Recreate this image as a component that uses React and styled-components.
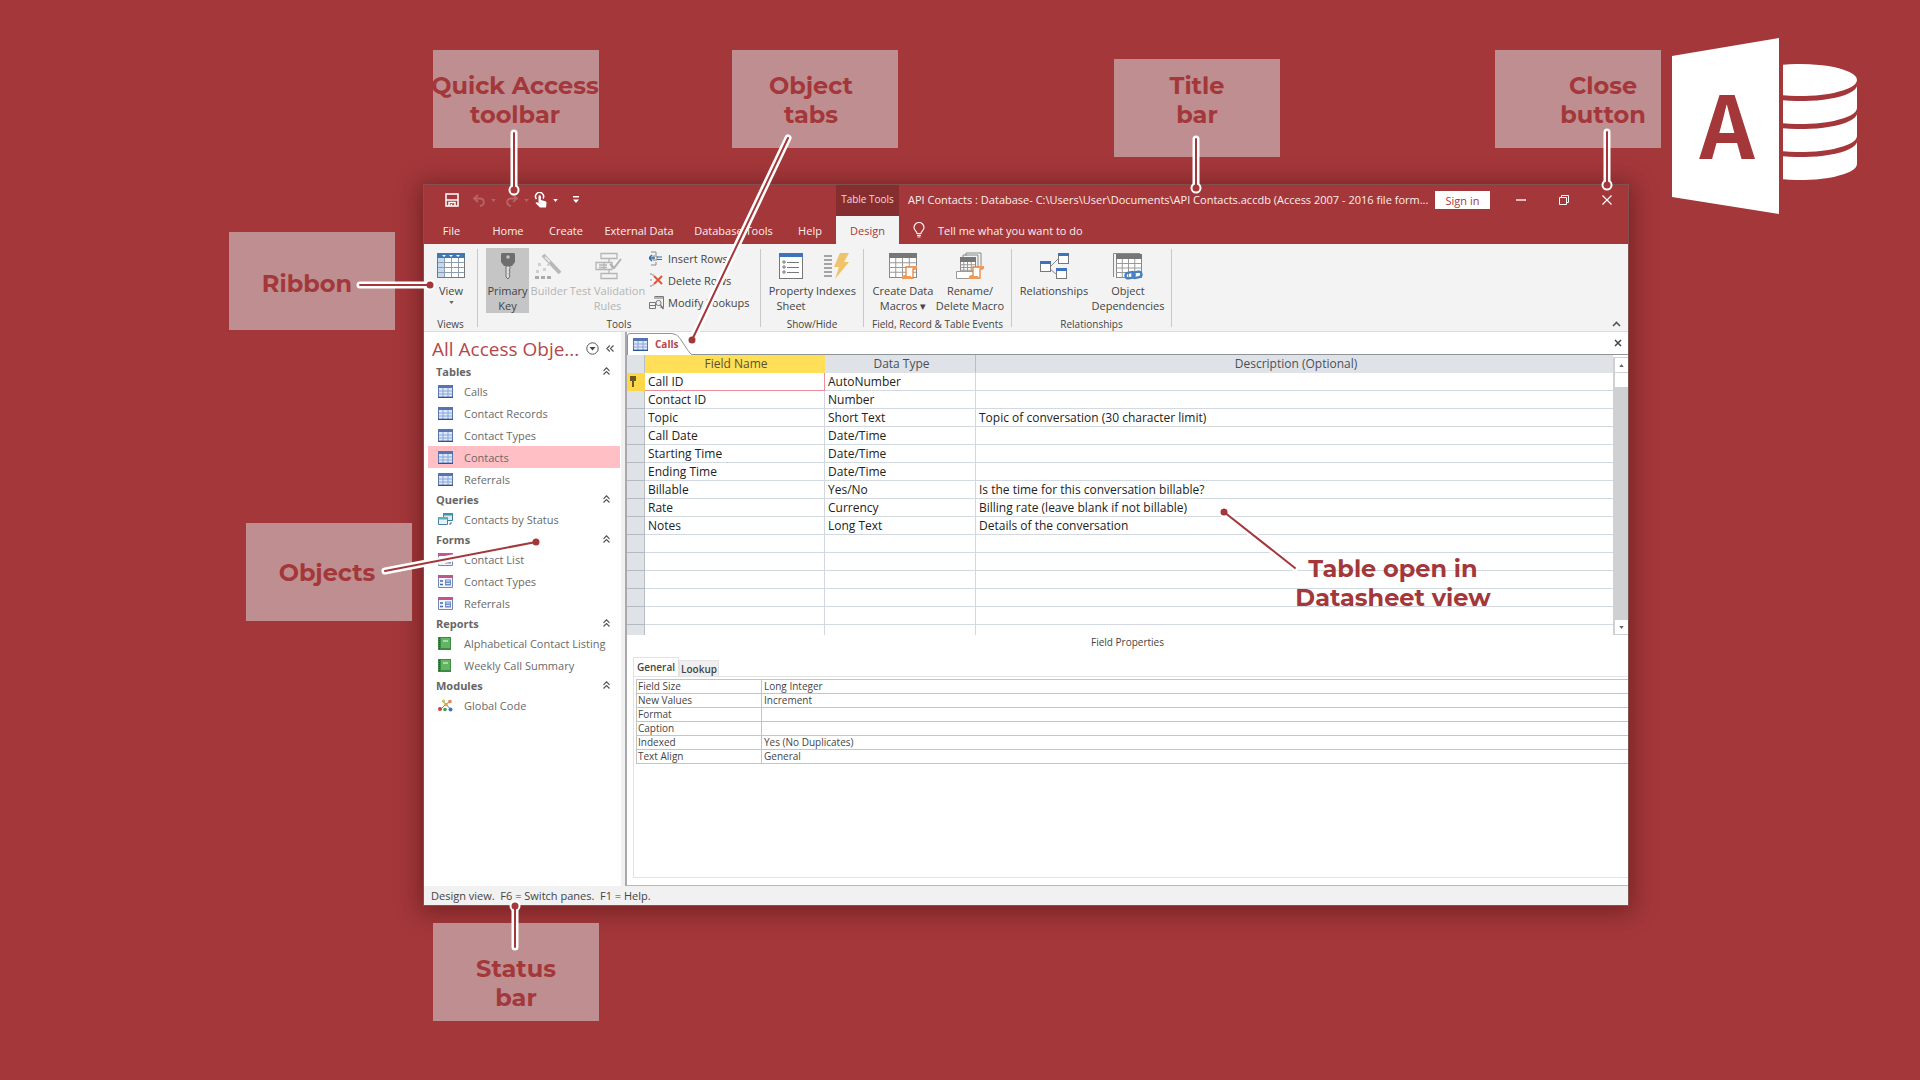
import React from "react";
import styled, { createGlobalStyle, css } from "styled-components";

const brand = "#a4373a";
const ui = `"Segoe UI", "Open Sans", "Noto Sans", sans-serif`;

const GlobalStyle = createGlobalStyle`
  *, *::before, *::after { box-sizing: border-box; }
  body { margin: 0; background: ${brand}; font-family: ${ui}; font-size: 11px; color: #444; }
  button { font: inherit; color: inherit; background: none; border: 0; padding: 0; margin: 0; cursor: pointer; }
  svg { display: block; flex: none; }
  ul { list-style: none; margin: 0; padding: 0; }
  table { border-collapse: separate; border-spacing: 0; table-layout: fixed; }
`;

/* ---------- poster canvas ---------- */

const Stage = styled.main`
  position: relative;
  min-height: 100vh;
  padding: 184px 291px 40px 423px;
  overflow: hidden;
`;

const CalloutBox = styled.div`
  position: absolute;
  left: ${(p) => p.$x}px;
  top: ${(p) => p.$y}px;
  width: 166px;
  height: 98px;
  background: #be8e90;
`;

const CalloutText = styled.p`
  position: absolute;
  left: ${(p) => p.$x}px;
  top: ${(p) => p.$y}px;
  transform: translate(-50%, -50%);
  margin: 0;
  font: 700 24px/29px Montserrat, Inter, sans-serif;
  color: ${brand};
  text-align: center;
  white-space: pre;
`;

const Overlay = styled.svg`
  position: absolute;
  left: 0;
  top: 0;
  pointer-events: none;
`;

const Logo = styled.svg`
  position: absolute;
  left: 1672px;
  top: 38px;
`;

/* ---------- window chrome ---------- */

const Window = styled.section`
  background: #fff;
  border: 1px solid #84504f;
  box-shadow: 0 3px 22px 4px rgba(40, 0, 4, 0.36);
`;

const TitleBar = styled.header`
  display: flex;
  height: 31px;
  background: ${brand};
  color: #fbeeee;
`;

const QuickAccess = styled.div`
  display: flex;
  align-items: center;
  flex: none;
  width: 412px;
  padding: 0 0 1px 21px;
`;

const QuickButton = styled.button`
  display: flex;
  align-items: center;
  flex: none;
  width: ${(p) => p.$w}px;
  gap: 5px;
  opacity: ${(p) => (p.disabled ? 0.22 : 1)};
`;

const ContextTitle = styled.div`
  flex: none;
  width: 63px;
  line-height: 29px;
  text-align: center;
  font-size: 10px;
  color: #f3dada;
  background: #862d30;
  white-space: nowrap;
`;

const WindowTitle = styled.h1`
  flex: 1;
  min-width: 0;
  margin: 0;
  padding-left: 9px;
  font-size: 11px;
  font-weight: 400;
  line-height: 29px;
  white-space: nowrap;
  overflow: hidden;
  text-overflow: ellipsis;
`;

const SignIn = styled.button`
  flex: none;
  width: 55px;
  height: 18px;
  margin: 6px 9px 0 0;
  background: #fff;
  color: ${brand};
`;

const ControlButton = styled.button`
  display: flex;
  flex: none;
  align-items: center;
  justify-content: center;
  width: 43px;
  padding-bottom: 2px;
`;

const MenuBar = styled.nav`
  display: flex;
  height: 28px;
  background: ${brand};
  color: #fbeeee;
`;

const MenuTab = styled.button`
  flex: none;
  width: ${(p) => p.$w}px;
  white-space: nowrap;
  ${(p) => p.$active && css`background: #f3f3f3; color: ${brand};`}
`;

const TellMe = styled.button`
  display: flex;
  align-items: center;
  gap: 13px;
  padding-left: 14px;
`;

/* ---------- ribbon ---------- */

const Ribbon = styled.div`
  display: flex;
  height: 88px;
  background: #f3f3f3;
  border-bottom: 1px solid #dcdcdc;
`;

const Group = styled.div`
  display: flex;
  flex-direction: column;
  justify-content: space-between;
  flex: none;
  width: ${(p) => p.$w}px;
  padding-top: 4px;
`;

const GroupTools = styled.div`
  display: flex;
  padding-left: ${(p) => p.$pad}px;
`;

const GroupLabel = styled.div`
  line-height: 14px;
  font-size: 10px;
  text-align: center;
  white-space: nowrap;
`;

const Separator = styled.div`
  flex: none;
  width: 1px;
  margin: 5px 0 4px;
  background: #c9c9c9;
`;

const BigButton = styled.button`
  display: flex;
  flex-direction: column;
  align-items: center;
  flex: none;
  width: ${(p) => p.$w}px;
  height: 65px;
  padding-top: 4px;
  gap: 3px;
  line-height: 15px;
  white-space: nowrap;
  background: ${(p) => (p.$pressed ? "#c5c5c5" : "none")};
  color: ${(p) => (p.disabled ? "#b3b3b3" : "#444")};
`;

const SmallTools = styled.div`
  display: flex;
  flex-direction: column;
  padding-left: 3px;
`;

const SmallButton = styled.button`
  display: flex;
  align-items: center;
  gap: 4px;
  height: 22px;
  padding-bottom: 2px;
  white-space: nowrap;
`;

const Collapse = styled.button`
  align-self: flex-end;
  margin: 0 7px 4px auto;
`;

/* ---------- navigation pane ---------- */

const Body = styled.div`
  display: flex;
  height: 554px;
`;

const NavPane = styled.aside`
  flex: none;
  width: 203px;
  padding: 3px 4px 0 4px;
  border-right: 2px solid #a9a9ad;
  box-shadow: inset -4px 0 0 #f1f1f2;
`;

const NavHeader = styled.div`
  display: flex;
  align-items: center;
  height: 27px;
  padding: 0 7px 0 4px;
  gap: 7px;
`;

const NavTitle = styled.h2`
  flex: 1;
  margin: 0;
  font-size: 19px;
  font-weight: 400;
  color: #b5474a;
  white-space: nowrap;
`;

const Category = styled.button`
  display: flex;
  align-items: center;
  justify-content: space-between;
  width: 100%;
  height: 18px;
  padding: 0 11px 0 8px;
  font-weight: 700;
  color: #666;
`;

const NavItem = styled.a`
  display: flex;
  align-items: center;
  gap: 11px;
  height: 22px;
  margin-right: 1px;
  padding-left: 10px;
  color: #6a6a6a;
  text-decoration: none;
  white-space: nowrap;
  background: ${(p) => (p.$selected ? "#ffbfc4" : "none")};
`;

/* ---------- document area ---------- */

const DocArea = styled.div`
  display: flex;
  flex-direction: column;
  flex: 1;
  min-width: 0;
`;

const DocTabs = styled.div`
  display: flex;
  align-items: center;
  justify-content: space-between;
  flex: none;
  height: 23px;
  padding-right: 6px;
  border-bottom: 1px solid #8f9499;
`;

const DocTab = styled.button`
  position: relative;
  display: flex;
  align-items: center;
  align-self: flex-end;
  gap: 7px;
  width: 66px;
  height: 22px;
  padding-left: 6px;
  margin-bottom: -1px;
  font-size: 10px;
  font-weight: 700;
  color: #b5474a;
`;

const TabShape = styled.svg`
  position: absolute;
  inset: 0;
  z-index: 0;
  & ~ * { position: relative; }
`;

const DesignPane = styled.div`
  display: flex;
  flex: none;
  height: 280px;
  overflow: hidden;
`;

const FieldTable = styled.table`
  flex: 1;
  min-width: 0;
  width: 100%;
  align-self: flex-start;
  font-size: 12px;
  color: #222;

  th, td {
    height: 18px;
    padding: 0 0 0 3px;
    line-height: 17px;
    text-align: left;
    white-space: nowrap;
    border-right: 1px solid #d3d6de;
    border-bottom: 1px solid #d3d9e2;
  }
  thead th {
    font-weight: 400;
    text-align: center;
    color: #4a4f57;
    background: #dfe3e8;
    border-bottom-color: #dfe3e8;
    border-right-color: #b9bec6;
  }
  tbody th { background: #dfe3e8; border-bottom-color: #b4bac3; border-right-color: #b9bec6; padding: 0 0 0 3px; }
  td:last-child, thead th:last-child { border-right: 0; }
`;

const ActiveTh = styled.th`
  &&& { background: #ffdf57; color: #5a5130; border-color: #ffdf57; }
`;

const RowSelector = styled.th`
  &&& { ${(p) => p.$active && css`background: #ffd84a; border-color: #ffd84a;`} }
`;

const ActiveCell = styled.td`
  &&& { border-bottom: 1px solid #f08f9b; border-right-color: #f08f9b; }
`;

const ScrollBar = styled.div`
  display: flex;
  flex-direction: column;
  flex: none;
  width: 15px;
  margin-top: 2px;
  padding: 1px 0 1px 2px;
  gap: 1px;
  background: #cfd0d1;
`;

const ScrollPart = styled.button`
  display: flex;
  align-items: center;
  justify-content: center;
  height: 14px;
  background: #fff;
  ${(p) => p.$last && css`margin-top: auto;`}
`;

const PaneCaption = styled.div`
  flex: none;
  line-height: 15px;
  text-align: center;
  font-size: 10px;
`;

const Properties = styled.div`
  display: flex;
  flex-direction: column;
  flex: 1;
  padding: 7px 0 7px 6px;
  border-bottom: 1px solid #b9b9b9;
`;

const PropTabs = styled.div`
  display: flex;
  align-items: flex-end;
`;

const PropTab = styled.button`
  height: ${(p) => (p.$active ? 19 : 16)}px;
  width: ${(p) => (p.$active ? 46 : 40)}px;
  border: 1px solid #e3e3e3;
  border-bottom: 0;
  font-size: 10px;
  font-weight: 600;
  background: ${(p) => (p.$active ? "#fff" : "#efefef")};
`;

const PropSheet = styled.div`
  flex: 1;
  padding: 2px 0 0 2px;
  border: 1px solid #e3e3e3;
  border-right: 0;
`;

const PropTable = styled.table`
  width: 100%;
  font-size: 10px;
  border-top: 1px solid #c4c4c4;
  border-left: 1px solid #c4c4c4;

  th, td {
    height: 14px;
    padding: 0 0 0 2px;
    line-height: 13px;
    font-weight: 400;
    text-align: left;
    border-bottom: 1px solid #c4c4c4;
  }
  th { border-right: 1px solid #c4c4c4; padding-left: 1px; }
`;

const StatusBar = styled.footer`
  height: 19px;
  padding-left: 7px;
  line-height: 19px;
  background: #f1f1f1;
  white-space: pre;
`;

/* ---------- icons ---------- */

const Caret = ({ fill = "#666", up }) => (
  <svg width="5" height="3" viewBox="0 0 6 4"><path d={up ? "M0 4h6L3 0z" : "M0 0h6L3 4z"} fill={fill} /></svg>
);

const SaveIcon = () => (
  <svg width="14" height="14" viewBox="0 0 14 14" fill="none" stroke="#fff" strokeWidth="1.500">
    <path d="M1 1h12v12H1zM1 7h12M4 13v-3.500h6V13" /><path d="M6.500 11v2" />
  </svg>
);

const UndoIcon = ({ flip }) => (
  <svg width="14" height="13" viewBox="0 0 14 13" fill="none" stroke="#fff" strokeWidth="1.800">
    <g transform={flip ? "translate(14 0) scale(-1 1)" : undefined}>
      <path d="M6 1L2 4.500 6 8M2 4.500h6c5 0 5 7 0 7.500" />
    </g>
  </svg>
);

const TouchIcon = () => (
  <svg width="14" height="16" viewBox="0 0 14 16">
    <path d="M2.500 7A4 4 0 1 1 9 6.500" fill="none" stroke="#fff" strokeWidth="1.500" />
    <path d="M4.500 4.500a1.200 1.200 0 0 1 2.400 0V8l4.600 1.200q1.200.4 1 2L12 15.500H6L1.500 11q1-1.500 3 0z" fill="#fff" />
  </svg>
);

const Bulb = () => (
  <svg width="12" height="16" viewBox="0 0 12 16" fill="none" stroke="#fbeeee" strokeWidth="1.200">
    <path d="M4 11.500C4 9 1 8.500 1 5.500a5 5 0 0 1 10 0C11 8.500 8 9 8 11.500zM4 13.300h4M4.500 15h3" />
  </svg>
);

const Icon = ({ children }) => <svg width="30" height="28" viewBox="0 0 30 28" fill="none">{children}</svg>;

const GridArt = ({ x = 1, y = 1, head = "#777", w = 27, h = 24 }) => (
  <g transform={`translate(${x} ${y})`}>
    <rect x=".5" y=".5" width={w} height={h} fill="#fff" stroke="#888" />
    <rect width={w + 1} height="5" fill={head} />
    <path
      d={`M0 ${5 + (h - 5) / 4}h${w}M0 ${5 + (h - 5) / 2}h${w}M0 ${5 + ((h - 5) * 3) / 4}h${w}M${w / 4} 5v${h - 5}M${w / 2} 5v${h - 5}M${(w * 3) / 4} 5v${h - 5}`}
      stroke="#999"
    />
  </g>
);

const ScrollArt = () => (
  <g>
    <path d="M18 15h9v2h-2v9h-9v-2h2z" fill="#fff" stroke="#e8833a" strokeWidth="1.300" />
    <path d="M14 24h9v3h-9zM25 14h4v3h-4z" fill="#f09a55" />
  </g>
);

const ViewIcon = () => (
  <Icon>
    <rect x="1.500" y="1.500" width="27" height="24" fill="#fff" stroke="#777" />
    <path d="M2 6h6v19H2z" fill="#c5d8f0" />
    <path d="M1 1h28v5H1z" fill="#3f78b5" />
    <path d="M6 3h4l-2 2zM13 3h4l-2 2zM20 3h4l-2 2z" fill="#fff" />
    <path d="M2 10.500h26M2 15.500h26M2 20.500h26M8.500 6v19M15.500 6v19M22.500 6v19" stroke="#8d9db0" />
  </Icon>
);

const KeyIcon = () => (
  <Icon>
    <path d="M9 1h12l1 1v8l-3 4H11l-3-4V2z" fill="#6e6e6e" />
    <circle cx="15" cy="5" r="1.800" fill="#c5c5c5" />
    <path d="M13 14h4v3l-1 1 1 2-1 2 1 2-2 3-2-2z" fill="#ddd" stroke="#6e6e6e" />
  </Icon>
);

const BuilderIcon = () => (
  <Icon>
    <path d="M9 3l17 18" stroke="#b8b8b8" strokeWidth="4" />
    <path d="M11 5l5 5" stroke="#e6e6e6" strokeWidth="2" />
    <path d="M4 11h3v3H4zM9 16h3v3H9zM2 18h3v3H2zM13 12h2v2h-2z" fill="#d0d0d0" />
    <path d="M1 24h4v3H1zM7 24h4v3H7zM13 24h4v3h-4z" fill="#aaa" />
  </Icon>
);

const ValidationIcon = () => (
  <Icon>
    <g stroke="#b5b5b5" strokeWidth="1.300">
      <path d="M8 1.500h16v5H8zM8 21.500h16v5H8zM3 10.500h16v7H3zM16 7v3M16 18v3M6 13h8M6 15.500h8M11 11v6" />
    </g>
    <path d="M17 12l4 4 7-9" stroke="#b0b0b0" strokeWidth="2" />
  </Icon>
);

const PropertyIcon = () => (
  <Icon>
    <rect x="3.500" y="1.500" width="23" height="25" fill="#fff" stroke="#777" />
    <path d="M3 1h24v4H3z" fill="#3d73bd" />
    <path d="M11 10.500h12M11 15.500h12M11 20.500h12" stroke="#777" />
    <path d="M7 9h2v2H7zM7 14h2v2H7zM7 19h2v2H7z" stroke="#777" />
  </Icon>
);

const IndexIcon = () => (
  <Icon>
    <path d="M3 4h8M3 8h8M3 12h8M3 16h8M3 20h8M3 24h8" stroke="#8a8a8a" strokeWidth="1.300" />
    <path d="M19 1h9l-5 9h5L14 27l4-12h-5z" fill="#f0c26a" />
  </Icon>
);

const MacroIcon = () => <Icon><GridArt /><ScrollArt /></Icon>;

const RenameIcon = () => (
  <Icon>
    <path d="M11 4V1h15v16" stroke="#888" /><path d="M8 6V3h15v14" stroke="#888" />
    <GridArt x={5} y={5} w={15} h={16} />
    <path d="M1.500 19.500h17v7h-17z" fill="#fff" stroke="#999" />
    <ScrollArt />
  </Icon>
);

const RelationIcon = () => (
  <Icon>
    <path d="M11 15l8-8M11 17l6 5" stroke="#888" />
    {[[1, 9], [19, 1], [17, 16]].map(([x, y]) => (
      <g key={x} transform={`translate(${x} ${y})`}>
        <rect x=".5" y=".5" width="10" height="10" fill="#fff" stroke="#777" />
        <path d="M0 0h11v3H0z" fill="#3d73bd" />
      </g>
    ))}
  </Icon>
);

const DependIcon = () => (
  <Icon>
    <path d="M.5 25V1.500H27" stroke="#888" />
    <GridArt x={3} y={2} w={25} h={23} />
    <g stroke="#4581c2" strokeWidth="2.400" fill="none">
      <rect x="12.500" y="20.500" width="9" height="5.500" rx="2.700" transform="rotate(-12 17 23)" />
      <rect x="19.500" y="20" width="9" height="5.500" rx="2.700" transform="rotate(-12 24 23)" />
    </g>
  </Icon>
);

const SmallIcon = ({ kind }) => (
  <svg width="15" height="15" viewBox="0 0 15 15" fill="none">
    {kind === "insert" && (
      <g><path d="M2 1h5v3M2 14h5v-3M4 5h4v4H4z" stroke="#888" /><path d="M0 7h6M3 4L0 7l3 3" stroke="#2f6fb5" strokeWidth="1.500" /><path d="M8 6h5M8 8.500h5" stroke="#2f6fb5" /></g>
    )}
    {kind === "delete" && (
      <g><path d="M1 1h3v3M1 13h3v-3M1 7h3" stroke="#888" strokeDasharray="2 1" /><path d="M5 3l8 8M13 3l-8 8" stroke="#e2543a" strokeWidth="2" /></g>
    )}
    {kind === "lookup" && (
      <g stroke="#777"><path d="M5.500 1.500h9v11h-3M5 3h10" /><path d="M.5 7.500h6v6h-6zM.5 10.500h6" /><circle cx="9.500" cy="8" r="2.600" fill="#eee" /><path d="M11.500 10l3 4" strokeWidth="1.500" /></g>
    )}
  </svg>
);

const ObjectIcon = ({ kind }) => (
  <svg width="15" height="13" viewBox="0 0 15 13">
    {kind === "table" && (
      <g><path d="M.5.5h14v12H.5z" fill="#dce9fb" stroke="#5a78ac" /><path d="M0 0h15v3H0z" fill="#5674b4" /><path d="M1 6h13M1 9h13M5 3v9M10 3v9" stroke="#8ba6d6" /><path d="M0 12.300h15" stroke="#34508a" strokeWidth="1.300" /></g>
    )}
    {kind === "query" && (
      <g><path d="M5.500.5h9v7h-9z" fill="#d7ecf4" stroke="#3a7fa0" /><path d="M5 0h10v2.500H5z" fill="#3d93a8" /><path d="M.5 4.500h9v7h-9z" fill="#e6f2fa" stroke="#4a7fa8" /><path d="M0 4h10v2.500H0z" fill="#5fb0b0" /><path d="M11 11h2V9" stroke="#3a6ea0" fill="none" /></g>
    )}
    {kind === "form" && (
      <g><path d="M.5.5h14v12H.5z" fill="#f1f5fc" stroke="#7286b0" /><path d="M0 0h15v3H0z" fill="#c2568a" /><path d="M2 6h3M2 9.500h3" stroke="#4468a8" strokeWidth="1.500" /><path d="M7 4.500h6v6H7z" fill="#6d8cc8" /><path d="M8 6h4M8 8.500h4" stroke="#dbe6f8" /></g>
    )}
    {kind === "report" && (
      <g><path d="M0 0h13v13H0z" fill="#3d8a42" /><path d="M3 1h9v10H3z" fill="#63b565" /><path d="M1.500 1v11" stroke="#27562b" strokeDasharray="1 1" /><path d="M5 3h5v2H5z" fill="#a4dba4" /></g>
    )}
    {kind === "module" && (
      <g><path d="M3 10l5-5 4 5M8 5L5 3M8 5l4-2" stroke="#8a8a8a" fill="none" /><circle cx="5.500" cy="2" r="1.600" fill="#c9c74a" /><circle cx="12" cy="2.500" r="1.800" fill="#e58a4a" /><circle cx="8" cy="5.500" r="1.700" fill="#e0a83a" /><circle cx="2" cy="10" r="2" fill="#c8443a" /><circle cx="7" cy="10.500" r="1.800" fill="#4a9a50" /><circle cx="12.500" cy="10.500" r="2" fill="#3f74c4" /></g>
    )}
  </svg>
);

const DoubleUp = () => (
  <svg width="7" height="8" viewBox="0 0 7 8" fill="none" stroke="#555" strokeWidth="1.200"><path d="M.5 3.800l3-3 3 3M.5 7.500l3-3 3 3" /></svg>
);

/* ---------- data ---------- */

const menu = [["File", 55], ["Home", 58], ["Create", 58], ["External Data", 88], ["Database Tools", 101], ["Help", 52], ["Design", 63]];

const nav = [
  ["Tables", "table", ["Calls", "Contact Records", "Contact Types", "Contacts", "Referrals"]],
  ["Queries", "query", ["Contacts by Status"]],
  ["Forms", "form", ["Contact List", "Contact Types", "Referrals"]],
  ["Reports", "report", ["Alphabetical Contact Listing", "Weekly Call Summary"]],
  ["Modules", "module", ["Global Code"]],
];

const fields = [
  ["Call ID", "AutoNumber", ""],
  ["Contact ID", "Number", ""],
  ["Topic", "Short Text", "Topic of conversation (30 character limit)"],
  ["Call Date", "Date/Time", ""],
  ["Starting Time", "Date/Time", ""],
  ["Ending Time", "Date/Time", ""],
  ["Billable", "Yes/No", "Is the time for this conversation billable?"],
  ["Rate", "Currency", "Billing rate (leave blank if not billable)"],
  ["Notes", "Long Text", "Details of the conversation"],
  ...Array.from({ length: 6 }, () => ["", "", ""]),
];

const props = [
  ["Field Size", "Long Integer"],
  ["New Values", "Increment"],
  ["Format", ""],
  ["Caption", ""],
  ["Indexed", "Yes (No Duplicates)"],
  ["Text Align", "General"],
];

const boxes = [[433, 50], [732, 50], [1114, 59], [1495, 50], [229, 232], [246, 523], [433, 923]];

const labels = [
  ["Quick Access\ntoolbar", 515, 100],
  ["Object\ntabs", 811, 100],
  ["Title\nbar", 1197, 100],
  ["Close\nbutton", 1603, 100],
  ["Ribbon", 307, 283],
  ["Objects", 327, 572],
  ["Status\nbar", 516, 983],
  ["Table open in\nDatasheet view", 1393, 583],
];

const pointers = [
  [514, 133, 514, 190],
  [788, 138, 692, 340],
  [1196, 139, 1196, 188],
  [1607, 132, 1607, 185],
  [360, 285, 430, 285],
  [385, 571, 536, 542],
  [515, 947, 515, 906],
  [1295, 568, 1224, 512],
];

function AppRibbon() {
  return (
    <Ribbon>
      <Group $w={53}>
        <GroupTools $pad={0}>
          <BigButton $w={54}><ViewIcon /><span>View</span><Caret /></BigButton>
        </GroupTools>
        <GroupLabel>Views</GroupLabel>
      </Group>
      <Separator />
      <Group $w={282}>
        <GroupTools $pad={8}>
          <BigButton $w={43} $pressed><KeyIcon /><span>Primary<br />Key</span></BigButton>
          <BigButton $w={40} disabled><BuilderIcon /><span>Builder</span></BigButton>
          <BigButton $w={77} disabled><ValidationIcon /><span>Test Validation<br />Rules</span></BigButton>
          <SmallTools>
            <SmallButton><SmallIcon kind="insert" />Insert Rows</SmallButton>
            <SmallButton><SmallIcon kind="delete" />Delete Rows</SmallButton>
            <SmallButton><SmallIcon kind="lookup" />Modify Lookups</SmallButton>
          </SmallTools>
        </GroupTools>
        <GroupLabel>Tools</GroupLabel>
      </Group>
      <Separator />
      <Group $w={102}>
        <GroupTools $pad={5}>
          <BigButton $w={50}><PropertyIcon /><span>Property<br />Sheet</span></BigButton>
          <BigButton $w={40}><IndexIcon /><span>Indexes</span></BigButton>
        </GroupTools>
        <GroupLabel>Show/Hide</GroupLabel>
      </Group>
      <Separator />
      <Group $w={147}>
        <GroupTools $pad={6}>
          <BigButton $w={66}><MacroIcon /><span>Create Data<br />Macros ▾</span></BigButton>
          <BigButton $w={68}><RenameIcon /><span>Rename/<br />Delete Macro</span></BigButton>
        </GroupTools>
        <GroupLabel>Field, Record &amp; Table Events</GroupLabel>
      </Group>
      <Separator />
      <Group $w={159}>
        <GroupTools $pad={4}>
          <BigButton $w={76}><RelationIcon /><span>Relationships</span></BigButton>
          <BigButton $w={72}><DependIcon /><span>Object<br />Dependencies</span></BigButton>
        </GroupTools>
        <GroupLabel>Relationships</GroupLabel>
      </Group>
      <Separator />
      <Collapse aria-label="Collapse ribbon">
        <svg width="9" height="6" viewBox="0 0 9 6" fill="none" stroke="#555" strokeWidth="1.600"><path d="M1 5l3.500-3.500L8 5" /></svg>
      </Collapse>
    </Ribbon>
  );
}

function Navigation() {
  return (
    <NavPane>
      <NavHeader>
        <NavTitle>All Access Obje...</NavTitle>
        <button aria-label="Choose category">
          <svg width="13" height="13" viewBox="0 0 13 13"><circle cx="6.500" cy="6.500" r="5.700" fill="none" stroke="#555" /><path d="M3.500 5h6l-3 3.500z" fill="#444" /></svg>
        </button>
        <button aria-label="Shutter bar">
          <svg width="8" height="7" viewBox="0 0 8 7" fill="none" stroke="#555" strokeWidth="1.200"><path d="M3.800.5l-3 3 3 3M7.500.5l-3 3 3 3" /></svg>
        </button>
      </NavHeader>
      {nav.map(([title, kind, items]) => (
        <div key={title}>
          <Category>{title}<DoubleUp /></Category>
          <ul>
            {items.map((name) => (
              <li key={name}>
                <NavItem href="#" $selected={name === "Contacts"}><ObjectIcon kind={kind} />{name}</NavItem>
              </li>
            ))}
          </ul>
        </div>
      ))}
    </NavPane>
  );
}

function Document() {
  return (
    <DocArea>
      <DocTabs>
        <DocTab>
          <TabShape width="66" height="22" viewBox="0 0 66 22"><path d="M.5 22V3q0-2.500 2.500-2.500h42q5 0 8 5l8 12q3 4.500 5 4.500" fill="#fff" stroke="#8f9499" /></TabShape>
          <ObjectIcon kind="table" /><span>Calls</span>
        </DocTab>
        <button aria-label="Close tab">
          <svg width="8" height="8" viewBox="0 0 8 8" stroke="#444" strokeWidth="1.500"><path d="M1 1l6 6M7 1L1 7" /></svg>
        </button>
      </DocTabs>
      <DesignPane>
        <FieldTable>
          <colgroup><col style={{ width: 18 }} /><col style={{ width: 180 }} /><col style={{ width: 151 }} /><col /></colgroup>
          <thead>
            <tr><th aria-label="Row selector" /><ActiveTh>Field Name</ActiveTh><th>Data Type</th><th>Description (Optional)</th></tr>
          </thead>
          <tbody>
            {fields.map(([name, type, text], i) => {
              const Cell = i === 0 ? ActiveCell : "td";
              return (
                <tr key={i}>
                  <RowSelector $active={i === 0}>
                    {i === 0 && <svg width="6" height="11" viewBox="0 0 6 11"><path d="M0 0h6v5H4v6H2V5H0z" fill="#6b5a20" /></svg>}
                  </RowSelector>
                  <Cell>{name}</Cell><td>{type}</td><td>{text}</td>
                </tr>
              );
            })}
          </tbody>
        </FieldTable>
        <ScrollBar>
          <ScrollPart aria-label="Scroll up"><Caret up /></ScrollPart>
          <ScrollPart aria-label="Scroll thumb" />
          <ScrollPart aria-label="Scroll down" $last><Caret /></ScrollPart>
        </ScrollBar>
      </DesignPane>
      <PaneCaption>Field Properties</PaneCaption>
      <Properties>
        <PropTabs><PropTab $active>General</PropTab><PropTab>Lookup</PropTab></PropTabs>
        <PropSheet>
          <PropTable>
            <colgroup><col style={{ width: 125 }} /><col /></colgroup>
            <tbody>
              {props.map(([k, v]) => <tr key={k}><th scope="row">{k}</th><td>{v}</td></tr>)}
            </tbody>
          </PropTable>
        </PropSheet>
      </Properties>
    </DocArea>
  );
}

export default function App() {
  return (
    <Stage>
      <GlobalStyle />
      {boxes.map(([x, y]) => <CalloutBox key={`${x}-${y}`} $x={x} $y={y} />)}
      <Window>
        <TitleBar>
          <QuickAccess>
            <QuickButton $w={27} aria-label="Save"><SaveIcon /></QuickButton>
            <QuickButton $w={33} aria-label="Undo" disabled><UndoIcon /><Caret fill="#fff" /></QuickButton>
            <QuickButton $w={29} aria-label="Redo" disabled><UndoIcon flip /><Caret fill="#fff" /></QuickButton>
            <QuickButton $w={39} aria-label="Touch mode"><TouchIcon /><Caret fill="#fff" /></QuickButton>
            <QuickButton $w={10} aria-label="Customize toolbar">
              <svg width="6" height="8" viewBox="0 0 6 8"><path d="M0 0h6v1.500H0zM0 3.500h6L3 7z" fill="#fff" /></svg>
            </QuickButton>
          </QuickAccess>
          <ContextTitle>Table Tools</ContextTitle>
          <WindowTitle>API Contacts : Database- C:\Users\User\Documents\API Contacts.accdb (Access 2007 - 2016 file form...</WindowTitle>
          <SignIn>Sign in</SignIn>
          <ControlButton aria-label="Minimize"><svg width="10" height="2"><path d="M0 1h10" stroke="#fff" strokeWidth="1.300" /></svg></ControlButton>
          <ControlButton aria-label="Restore">
            <svg width="10" height="10" viewBox="0 0 10 10" fill="none" stroke="#fff"><path d="M.5 2.500h7v7h-7zM2.500 2V.5h7v7H8" /></svg>
          </ControlButton>
          <ControlButton aria-label="Close"><svg width="10" height="10" viewBox="0 0 10 10" stroke="#fff" strokeWidth="1.200"><path d="M.5.5l9 9M9.500.5l-9 9" /></svg></ControlButton>
        </TitleBar>
        <MenuBar>
          {menu.map(([name, w]) => <MenuTab key={name} $w={name === "File" ? 55 : w} $active={name === "Design"}>{name}</MenuTab>)}
          <TellMe><Bulb />Tell me what you want to do</TellMe>
        </MenuBar>
        <AppRibbon />
        <Body><Navigation /><Document /></Body>
        <StatusBar>Design view.  F6 = Switch panes.  F1 = Help.</StatusBar>
      </Window>
      <Overlay width="1920" height="1080" viewBox="0 0 1920 1080" aria-hidden="true">
        {pointers.map(([x1, y1, x2, y2], i) => (
          <g key={i} strokeLinecap="round">
            <line x1={x1} y1={y1} x2={x2} y2={y2} stroke="#fff" strokeWidth="7" />
            <circle cx={x2} cy={y2} r="5.500" fill="#fff" />
            <line x1={x1} y1={y1} x2={x2} y2={y2} stroke={brand} strokeWidth="2" />
            <circle cx={x2} cy={y2} r="3.500" fill={brand} />
          </g>
        ))}
      </Overlay>
      {labels.map(([text, x, y]) => <CalloutText key={text} $x={x} $y={y}>{text}</CalloutText>)}
      <Logo width="186" height="177" viewBox="1672 38 186 177">
        <path d="M1672 56L1779 38v176L1672 197z" fill="#fff" />
        <g fill="#fff">
          <path d="M1783 64.700A57 16 0 0 1 1857 80A57 16 0 0 1 1783 95.300Z" />
          {[0, 28, 56].map((d) => (
            <path key={d} transform={`translate(0 ${d})`} d="M1783 100.300A57 16 0 0 0 1857 84V108A57 16 0 0 1 1783 123.300Z" />
          ))}
        </g>
        <text x="1727" y="159" textAnchor="middle" fontFamily="'Noto Sans CJK SC', Roboto, sans-serif" fontWeight="700" fontSize="86" fill={brand}>A</text>
      </Logo>
    </Stage>
  );
}
